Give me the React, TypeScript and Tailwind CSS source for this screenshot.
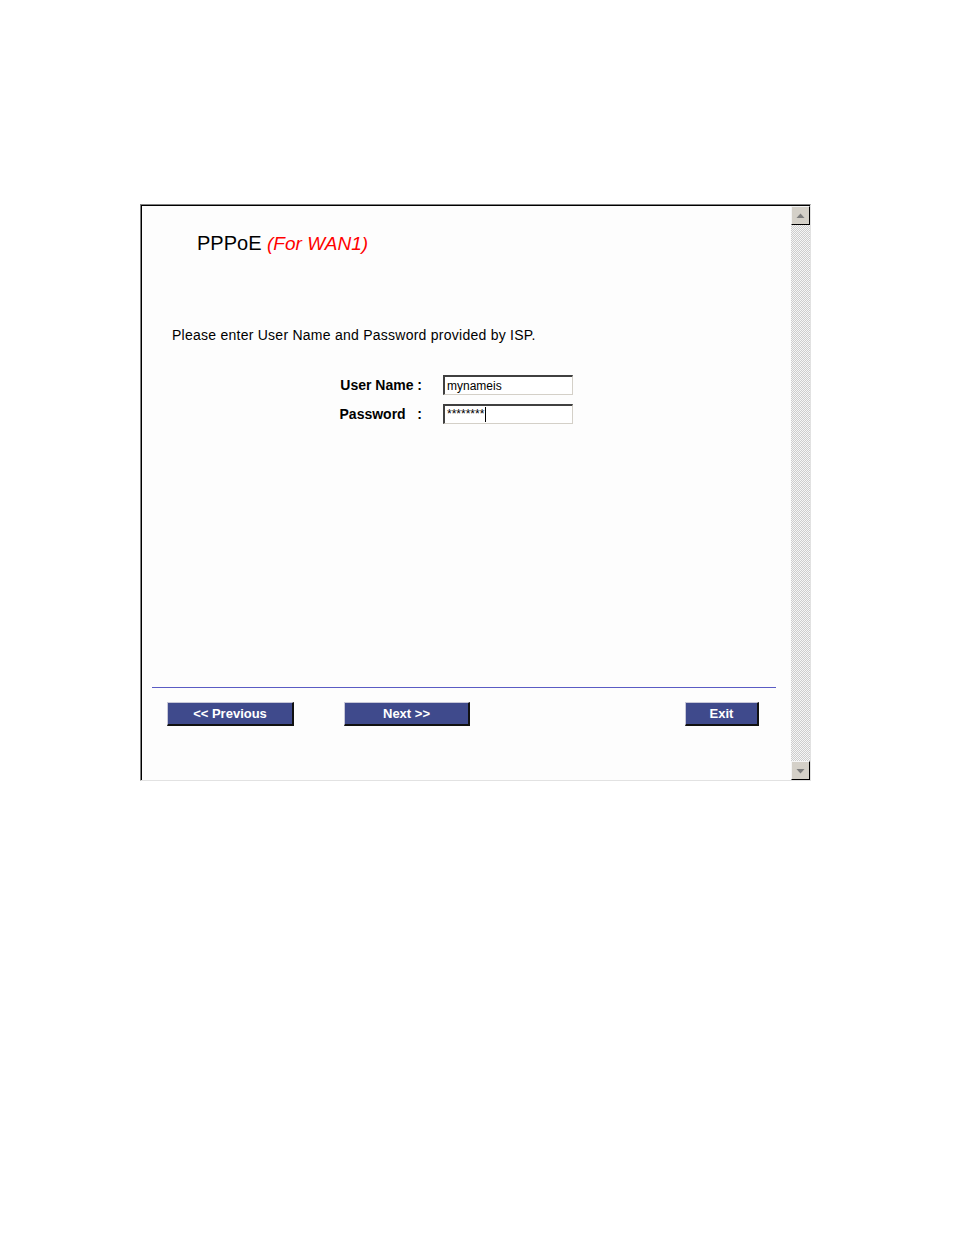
import React from "react"

function ScrollButton({ dir }: { dir: "up" | "down" }) {
  return (
    <div className="w-[19px] h-[19px] bg-[#d4d0c8] border-t border-l border-[#f4f4f4] border-r border-b border-r-black border-b-black flex items-center justify-center">
      <svg width="9" height="6" viewBox="0 0 9 6">
        {dir === "up"
          ? <polygon points="4.5,0.5 8.5,5 0.5,5" fill="#7c7c7c" />
          : <polygon points="0.5,1 8.5,1 4.5,5.5" fill="#7c7c7c" />}
      </svg>
    </div>
  )
}

function WizButton({ label, width }: { label: string; width: string }) {
  return (
    <div
      className={`${width} h-[24px] bg-[#3f4a8c] border-t border-l border-[#c8c8d8] border-r-2 border-b-2 border-r-[#111] border-b-[#111] flex items-center justify-center text-white text-[13px] font-bold leading-none`}
    >
      {label}
    </div>
  )
}

function Field({ label, children }: { label: string; children: React.ReactNode }) {
  return (
    <div className="flex items-center">
      <div className="w-[280px] text-right text-[14px] font-bold text-black leading-[20px] whitespace-pre">{label}</div>
      <div className="ml-[21px] w-[130px] h-[20px] bg-white border-t-2 border-l-2 border-t-[#404040] border-l-[#404040] border-r border-b border-r-[#d4d0c8] border-b-[#d4d0c8] flex items-center pl-[2px] text-[12px] text-black leading-none">
        {children}
      </div>
    </div>
  )
}

export default function App() {
  return (
    <div className="w-[954px] h-[1235px] bg-white pt-[204px] pl-[140px] font-['Liberation_Sans',Arial,sans-serif]">
      <div className="w-[671px] h-[577px] border-t border-l border-[#808080] border-r border-b border-r-[#e2e2e2] border-b-[#e2e2e2]">
        <div className="w-full h-full border-t border-l border-black flex bg-[#fdfdfd]">
          <div className="flex-1 flex flex-col">
            <div className="mt-[25px] h-[24px] pl-[55px] text-[20px] leading-[24px] text-black">
              PPPoE <span className="italic text-[19px] text-[#ff0000]">(For WAN1)</span>
            </div>

            <div className="mt-[72px] pl-[30px] text-[14px] leading-[16px] tracking-[0.25px] text-black">
              Please enter User Name and Password provided by ISP.
            </div>

            <div className="mt-[32px] flex flex-col gap-[9px]">
              <Field label="User Name :">mynameis</Field>
              <Field label={"Password   :"}>
                <span className="text-[12px] leading-none self-start mt-[2px]">********</span>
                <span className="w-px h-[15px] bg-black ml-px" />
              </Field>
            </div>

            <div className="mt-[263px] ml-[10px] w-[624px] h-px bg-[#5a5cc4]" />

            <div className="mt-[14px] flex">
              <div className="ml-[25px]">
                <WizButton label="<< Previous" width="w-[127px]" />
              </div>
              <div className="ml-[50px]">
                <WizButton label="Next >>" width="w-[126px]" />
              </div>
              <div className="ml-[215px]">
                <WizButton label="Exit" width="w-[74px]" />
              </div>
            </div>
          </div>

          <div className="w-[19px] flex flex-col">
            <ScrollButton dir="up" />
            <div className="flex-1 bg-[repeating-conic-gradient(#cdcdcd_0_25%,#f6f6f6_0_50%)] bg-[length:2px_2px]" />
            <ScrollButton dir="down" />
          </div>
        </div>
      </div>
    </div>
  )
}
